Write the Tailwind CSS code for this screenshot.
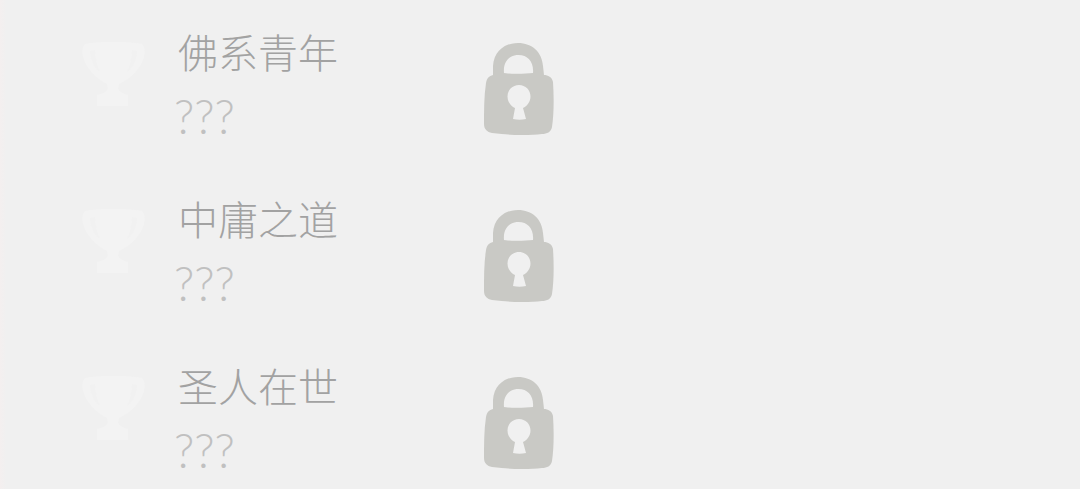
<!DOCTYPE html>
<html lang="zh">
<head>
  <meta charset="UTF-8">
  <title>成就</title>
  <script src="https://cdn.jsdelivr.net/npm/@tailwindcss/browser@4"></script>
</head>
<body class="h-[489px] w-[1080px] overflow-hidden bg-[#f0f0f0] font-['Noto_Sans_CJK_SC','Noto_Sans',sans-serif]">
  <div class="h-[489px] w-full overflow-hidden bg-linear-to-r from-[#f4efef] to-[#f0f0f0] to-[6px] pt-[42px]">

    <!-- row 1 -->
    <div class="flex h-[167px] items-start pl-[82px]">
      <svg class="w-[63px] h-[64px] shrink-0 blur-[0.6px]" viewBox="0 0 63 64">
        <path fill="#f3f3f3" d="M3 2 C20 -1 43 -1 60 2 C64 6 63 14 60 20 C56 30 46 38 37 42 L36 46 C37 50 42 52 46 53 L46 64 L15 64 L15 53 C20 52 25 50 26 46 L25 42 C17 38 7 30 3 20 C0 14 -1 6 3 2 Z"/>
        <path fill="#f1f1f1" d="M8 9 C8 18 13 27 18 30 C15 24 13 16 13 8 Z M50 8 C50 16 48 24 45 30 C50 27 55 18 55 9 Z"/>
      </svg>
      <div class="ml-[30px] flex flex-col">
        <div class="-mt-[21px] ml-[3px] text-[40px] leading-[60px] font-light text-[#a2a2a2]">佛系青年</div>
        <div class="mt-[13px] -ml-[1px] text-[47px] leading-[44px] font-['Lato'] font-light text-[#c0c0c0]">???</div>
      </div>
      <svg class="ml-[146px] w-[70px] h-[94px] shrink-0 blur-[0.4px]" viewBox="0 0 70 94" fill="#c9c9c5" fill-rule="evenodd">
        <path d="M9 33 L9 24 C10 9 21 1 34 1 C48 1 58 10 59 24 L60 33 C64 33 68 35 69 40 C70 55 70 72 68 85 C67 90 63 92 58 92 C43 94 24 93 8 91 C3 90 0 87 0 82 C0 68 0 54 2 41 C3 36 5 34 9 33 Z M20 31 C28 32 40 32 49 31 C50 20 44 13 34.5 13 C25 13 19 20 20 31 Z M35 43 C28.5 43 23.5 48 23.5 54.5 C23.5 60 27 64 31 66 L29 77 C33 78 38 78 42 77 L39 66 C43 64 46.5 60 46.5 54.5 C46.5 48 41.500 43 35 43 Z"/>
      </svg>
    </div>

    <!-- row 2 -->
    <div class="flex h-[167px] items-start pl-[82px]">
      <svg class="w-[63px] h-[64px] shrink-0 blur-[0.6px]" viewBox="0 0 63 64">
        <path fill="#f3f3f3" d="M3 2 C20 -1 43 -1 60 2 C64 6 63 14 60 20 C56 30 46 38 37 42 L36 46 C37 50 42 52 46 53 L46 64 L15 64 L15 53 C20 52 25 50 26 46 L25 42 C17 38 7 30 3 20 C0 14 -1 6 3 2 Z"/>
        <path fill="#f1f1f1" d="M8 9 C8 18 13 27 18 30 C15 24 13 16 13 8 Z M50 8 C50 16 48 24 45 30 C50 27 55 18 55 9 Z"/>
      </svg>
      <div class="ml-[30px] flex flex-col">
        <div class="-mt-[21px] ml-[3px] text-[40px] leading-[60px] font-light text-[#a2a2a2]">中庸之道</div>
        <div class="mt-[13px] -ml-[1px] text-[47px] leading-[44px] font-['Lato'] font-light text-[#c0c0c0]">???</div>
      </div>
      <svg class="ml-[146px] w-[70px] h-[94px] shrink-0 blur-[0.4px]" viewBox="0 0 70 94" fill="#c9c9c5" fill-rule="evenodd">
        <path d="M9 33 L9 24 C10 9 21 1 34 1 C48 1 58 10 59 24 L60 33 C64 33 68 35 69 40 C70 55 70 72 68 85 C67 90 63 92 58 92 C43 94 24 93 8 91 C3 90 0 87 0 82 C0 68 0 54 2 41 C3 36 5 34 9 33 Z M20 31 C28 32 40 32 49 31 C50 20 44 13 34.5 13 C25 13 19 20 20 31 Z M35 43 C28.5 43 23.5 48 23.5 54.5 C23.5 60 27 64 31 66 L29 77 C33 78 38 78 42 77 L39 66 C43 64 46.5 60 46.5 54.5 C46.5 48 41.500 43 35 43 Z"/>
      </svg>
    </div>

    <!-- row 3 -->
    <div class="flex items-start pl-[82px]">
      <svg class="w-[63px] h-[64px] shrink-0 blur-[0.6px]" viewBox="0 0 63 64">
        <path fill="#f3f3f3" d="M3 2 C20 -1 43 -1 60 2 C64 6 63 14 60 20 C56 30 46 38 37 42 L36 46 C37 50 42 52 46 53 L46 64 L15 64 L15 53 C20 52 25 50 26 46 L25 42 C17 38 7 30 3 20 C0 14 -1 6 3 2 Z"/>
        <path fill="#f1f1f1" d="M8 9 C8 18 13 27 18 30 C15 24 13 16 13 8 Z M50 8 C50 16 48 24 45 30 C50 27 55 18 55 9 Z"/>
      </svg>
      <div class="ml-[30px] flex flex-col">
        <div class="-mt-[21px] ml-[3px] text-[40px] leading-[60px] font-light text-[#a2a2a2]">圣人在世</div>
        <div class="mt-[13px] -ml-[1px] text-[47px] leading-[44px] font-['Lato'] font-light text-[#c0c0c0]">???</div>
      </div>
      <svg class="ml-[146px] w-[70px] h-[94px] shrink-0 blur-[0.4px]" viewBox="0 0 70 94" fill="#c9c9c5" fill-rule="evenodd">
        <path d="M9 33 L9 24 C10 9 21 1 34 1 C48 1 58 10 59 24 L60 33 C64 33 68 35 69 40 C70 55 70 72 68 85 C67 90 63 92 58 92 C43 94 24 93 8 91 C3 90 0 87 0 82 C0 68 0 54 2 41 C3 36 5 34 9 33 Z M20 31 C28 32 40 32 49 31 C50 20 44 13 34.5 13 C25 13 19 20 20 31 Z M35 43 C28.5 43 23.5 48 23.5 54.5 C23.5 60 27 64 31 66 L29 77 C33 78 38 78 42 77 L39 66 C43 64 46.5 60 46.5 54.5 C46.5 48 41.500 43 35 43 Z"/>
      </svg>
    </div>

  </div>
</body>
</html>
